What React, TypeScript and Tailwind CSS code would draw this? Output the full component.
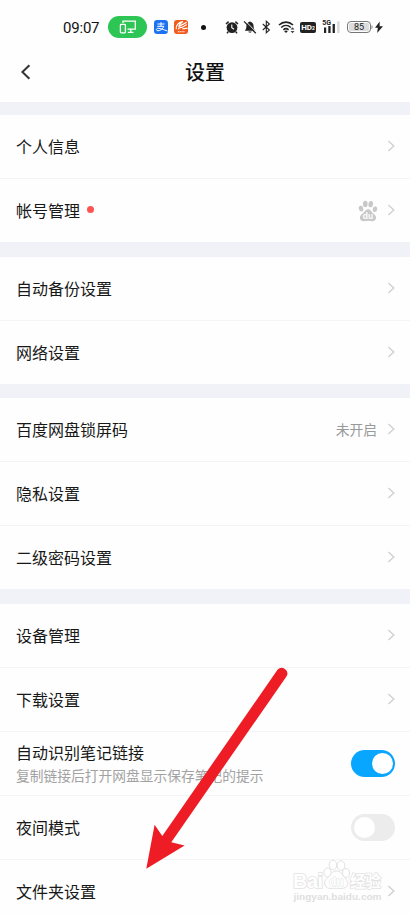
import type { ReactNode } from "react";

const ChevronIcon = () => (
  <svg className="w-2 h-3 -mt-px shrink-0" viewBox="0 0 8 12" fill="none">
    <path d="M1.4 1L6.8 6L1.4 11" stroke="#d0d0d0" strokeWidth="1.4" />
  </svg>
);

const PawIcon = () => (
  <svg className="w-5 h-[22px] -mr-px" viewBox="0 0 20 22" fill="#c8c8c8">
    <ellipse cx="3" cy="8.6" rx="2.2" ry="2.9" transform="rotate(-12 3 8.6)" />
    <ellipse cx="7.3" cy="4" rx="2.3" ry="3.2" />
    <ellipse cx="12.7" cy="4.1" rx="2.3" ry="3.2" transform="rotate(8 12.7 4.1)" />
    <ellipse cx="17" cy="9.2" rx="2.2" ry="2.8" transform="rotate(8 17 9.2)" />
    <path d="M10 9.2C7.5 9.2 6.8 11.6 4.9 13.2C3.2 14.6 1.9 15.5 1.9 17.8C1.9 20.2 3.6 21.3 5.8 21.2C7.4 21.1 8.5 20.8 10 20.8C11.5 20.8 12.8 21.2 14.2 21.2C16.6 21.2 18 20 18 17.8C18 15.6 16.7 14.7 15.1 13.3C13.3 11.7 12.6 9.2 10 9.2Z" />
    <text
      x="10"
      y="19.3"
      fontSize="8.5"
      fontWeight="700"
      textAnchor="middle"
      fill="#fff"
      fontFamily="Liberation Sans, sans-serif"
    >
      du
    </text>
  </svg>
);

const StatusBar = () => (
  <div className="h-[42px] pt-[13px] shrink-0">
    <div className="h-[29px] -mt-px flex items-start">
      <span className="ml-[63px] w-[38px] pt-[6px] font-['Roboto',sans-serif] text-[15px] leading-5 text-[#111] tracking-[-0.2px]">
        09:07
      </span>
      <div className="ml-[7px] mt-1 w-[39px] h-[22px] rounded-full bg-[#2dc553] flex items-center justify-center">
        <svg className="w-[18px] h-[14px]" viewBox="0 0 18 14" fill="none" stroke="#fff" strokeWidth="1.3">
          <path d="M4 3V1.2H16.3V9.2H8.5M11.8 9.2V12M8.8 12.4H14.5" />
          <rect x="1.4" y="4.4" width="5" height="8.4" rx="0.8" />
        </svg>
      </div>
      <svg className="ml-[7px] mt-[8px] w-[14px] h-[14px]" viewBox="0 0 14 14" fill="none">
        <rect width="14" height="14" rx="3.2" fill="#1c72f3" />
        <path
          d="M3.5 4H10.5M7 2.2V6.2M3.2 6.3H9.8C9 8.6 6.4 10.8 4 10.8C1.8 10.8 1.9 8.3 4.2 8.3C6.6 8.3 9.4 9.7 13.5 11"
          stroke="#fff"
          strokeWidth="1"
        />
      </svg>
      <svg className="ml-[6px] mt-[8px] w-[14px] h-[14px]" viewBox="0 0 14 14" fill="none">
        <rect width="14" height="14" rx="3" fill="#f2591c" />
        <path d="M2.2 9.2C1.8 5.5 4.5 2 9 1.6C6.5 3 5.2 4.8 5 6.4L12.8 2.2M4.2 9.4C5 7 7 7.2 8 7.4L12.8 4.6M8.4 8.8L13.6 8.2" stroke="#fff" strokeWidth="1.2" />
        <path d="M3.8 11.8H10.6" stroke="#fff" strokeWidth="1.1" strokeDasharray="1.3 0.5" />
      </svg>
      <span className="ml-[13px] mt-[13px] w-[5px] h-[5px] rounded-full bg-[#111]" />

      <svg className="ml-[19px] mt-[8px] w-[14px] h-[14px]" viewBox="0 0 14 14" fill="none">
        <circle cx="7" cy="7.6" r="5.4" fill="#222" />
        <path d="M1 4L3.6 1.6M13 4L10.4 1.6M3.2 11.8L2 13.2M10.8 11.8L12 13.2" stroke="#222" strokeWidth="1.5" />
        <path d="M6.8 4.6V7.8L9 9.2" stroke="#fff" strokeWidth="1.1" />
      </svg>
      <svg className="ml-[4px] mt-[8px] w-[14px] h-[14px]" viewBox="0 0 14 14" fill="none">
        <path d="M7 1.4C4.5 2 3.4 3.7 3.4 6.2C3.4 8.6 2.6 9.6 1.7 10.8H12.3C11.4 9.6 10.6 8.6 10.6 6.2C10.6 3.7 9.5 2 7 1.4ZM5.3 11.6C5.7 13.2 8.3 13.2 8.7 11.6Z" fill="#222" />
        <path d="M2.2 0.8L13.6 12.4" stroke="#fff" strokeWidth="1" />
        <path d="M1 1.4L12.8 13.2" stroke="#222" strokeWidth="1.3" />
      </svg>
      <svg className="ml-[5px] mt-[8px] w-[9px] h-[14px]" viewBox="0 0 9 14" fill="none">
        <path d="M0.8 4L7.4 10L4.3 12.8V1.2L7.4 4L0.8 10" stroke="#222" strokeWidth="1.1" />
      </svg>
      <svg className="ml-[7px] mt-[8px] w-[18px] h-[14px]" viewBox="0 0 18 14" fill="none">
        <path d="M1 5C5 1.2 11 1.2 15 5M3.2 7.5C6 4.9 10 4.9 12.8 7.5M5.4 9.8C7 8.4 9 8.4 10.6 9.8" stroke="#222" strokeWidth="1.6" />
        <path d="M6.2 11.2C7.2 10.2 8.8 10.2 9.8 11.2L8 13.1Z" fill="#222" />
        <path d="M14.5 7.2L16.5 9.6H12.5ZM14.5 13.3L16.5 10.9H12.5Z" fill="#444" />
      </svg>
      <span className="ml-[4px] mt-[10px] w-[16px] h-[11px] rounded-[2px] bg-[#222] text-white text-center font-['Roboto',sans-serif] font-bold text-[8px] leading-[11px]">
        HD<span className="text-[5px]">2</span>
      </span>
      <svg className="ml-[6px] mt-[7px] w-[19px] h-[15px]" viewBox="0 0 19 15">
        <text x="0.2" y="6" fontSize="7" fontWeight="700" fill="#222" fontFamily="Roboto, sans-serif">
          5G
        </text>
        <path d="M2 8.5H4.2V14H2ZM6.3 7H8.6V14H6.3ZM10.6 5H12.9V14H10.6Z" fill="#222" />
        <path d="M15.2 2.3H17.6V14H15.2Z" fill="#d8d8d8" />
      </svg>
      <div className="ml-[6px] mt-[9px] w-[24px] h-[12px] rounded-[4px] border border-[#777] p-px">
        <div className="w-full h-full rounded-[2px] bg-[#dcdcdc] text-center font-['Roboto',sans-serif] text-[9px] leading-[9px] text-[#222]">
          85
        </div>
      </div>
      <svg className="mt-[8px] w-[13px] h-[14px]" viewBox="0 0 13 14">
        <path d="M0.5 5.3C1.8 5.5 1.8 8.7 0.5 8.9Z" fill="#777" />
        <path d="M8.7 1.5L4 7.8H6.8L6.2 13L12 6.2H8.6Z" fill="#222" />
      </svg>
    </div>
  </div>
);

const Header = () => (
  <header className="relative h-[60px] shrink-0 flex items-center justify-center">
    <svg className="absolute left-5 top-[21px] w-3 h-[18px]" viewBox="0 0 12 18" fill="none">
      <path d="M9.4 2.2L2.4 9L9.4 15.8" stroke="#333" strokeWidth="2" />
    </svg>
    <h1 className="text-[20px] leading-7 font-medium text-[#111]">设置</h1>
  </header>
);

interface RowProps {
  label: string;
  desc?: string;
  dot?: boolean;
  last?: boolean;
  children?: ReactNode;
}

const Row = ({ label, desc, dot, last, children }: RowProps) => (
  <div
    className={`flex items-center justify-between pl-4 pr-[15px] ${
      last ? "h-[63px]" : "h-16 border-b border-[#f4f4f5]"
    }`}
  >
    <div className={desc ? "-mt-px" : "-mt-0.5"}>
      <p className="flex items-center text-[16px] leading-6 text-[#181818]">
        {label}
        {dot && <span className="ml-[7px] w-[7px] h-[7px] rounded-full bg-[#fc5353]" />}
      </p>
      {desc && <p className="text-[13.75px] leading-[22px] text-[#a2a2a2] whitespace-nowrap">{desc}</p>}
    </div>
    <div className="flex items-center">{children ?? <ChevronIcon />}</div>
  </div>
);

const Toggle = ({ on }: { on?: boolean }) => (
  <span
    className={`flex items-center w-11 h-[27px] rounded-full px-[2.5px] ${
      on ? "bg-[#09a6ff] justify-end" : "bg-[#ececec]"
    }`}
  >
    <span className="w-[21px] h-[21px] rounded-full bg-white" />
  </span>
);

const Arrow = () => (
  <svg className="absolute left-[140px] top-[660px] w-[155px] h-[215px]" viewBox="140 660 155 215" fill="#ee1c25">
    <path d="M146.3 868.8L154.6 824.8L162.3 836L277.5 669.8A5.6 5.6 0 0 1 286.6 676.2L171.3 842.2L184.6 845.5Z" />
  </svg>
);

const Watermark = () => (
  <svg
    className="absolute left-[288px] top-[856px] w-[100px] h-[52px]"
    viewBox="288 856 100 52"
    fill="#fff"
    stroke="#e2e2e2"
    strokeWidth="1"
  >
    <g fontFamily="Liberation Sans, Noto Sans CJK SC, sans-serif" fontWeight="700">
      <text x="293" y="888" fontSize="20" textLength="30" strokeWidth="1.6" paintOrder="stroke">
        Bai
      </text>
      <ellipse cx="327.5" cy="872.5" rx="3.6" ry="4.6" />
      <ellipse cx="333" cy="865" rx="3.8" ry="4.8" />
      <ellipse cx="341" cy="865.6" rx="3.8" ry="4.8" />
      <ellipse cx="346" cy="873" rx="3.5" ry="4.4" />
      <path d="M336.5 871C332 871 331 875 328 877.5C325 880 324 882 325 885C326 888.5 329.5 888.8 336 888.2C342 888.8 346 888.5 347.3 885.5C348.5 882.5 347 880 344.5 877.5C341.8 874.8 341 871 336.5 871Z" />
      <text x="336.3" y="886.2" fontSize="12" textAnchor="middle" strokeWidth="1" paintOrder="stroke">
        du
      </text>
      <text x="350" y="887" fontSize="15.5" strokeWidth="1.5" paintOrder="stroke">
        经验
      </text>
      <text x="293.5" y="899.5" fontSize="9.5" textLength="88" lengthAdjust="spacingAndGlyphs" strokeWidth="0" fill="#dfdfdf">
        jingyan.baidu.com
      </text>
    </g>
  </svg>
);

const App = () => {
  return (
    <div className="relative w-[410px] h-[914px] overflow-hidden bg-[#fefefe] flex flex-col font-['Noto_Sans_CJK_SC',sans-serif]">
      <StatusBar />
      <Header />
      <div className="h-[13px] shrink-0 bg-[#f1f2f8]" />

      <section className="shrink-0">
        <Row label="个人信息" />
        <Row label="帐号管理" dot last>
          <PawIcon />
          <span className="ml-[10px] flex">
            <ChevronIcon />
          </span>
        </Row>
      </section>
      <div className="h-[15px] shrink-0 bg-[#f1f2f8]" />

      <section className="shrink-0">
        <Row label="自动备份设置" />
        <Row label="网络设置" last />
      </section>
      <div className="h-[14px] shrink-0 bg-[#f1f2f8]" />

      <section className="shrink-0">
        <Row label="百度网盘锁屏码">
          <span className="mr-[10px] text-[13.75px] text-[#999]">未开启</span>
          <ChevronIcon />
        </Row>
        <Row label="隐私设置" />
        <Row label="二级密码设置" last />
      </section>
      <div className="h-[15px] shrink-0 bg-[#f1f2f8]" />

      <section className="shrink-0">
        <Row label="设备管理" />
        <Row label="下载设置" />
        <Row label="自动识别笔记链接" desc="复制链接后打开网盘显示保存笔记的提示">
          <Toggle on />
        </Row>
        <Row label="夜间模式">
          <Toggle />
        </Row>
        <Row label="文件夹设置" />
      </section>

      <Arrow />
      <Watermark />
    </div>
  );
};

export default App;
